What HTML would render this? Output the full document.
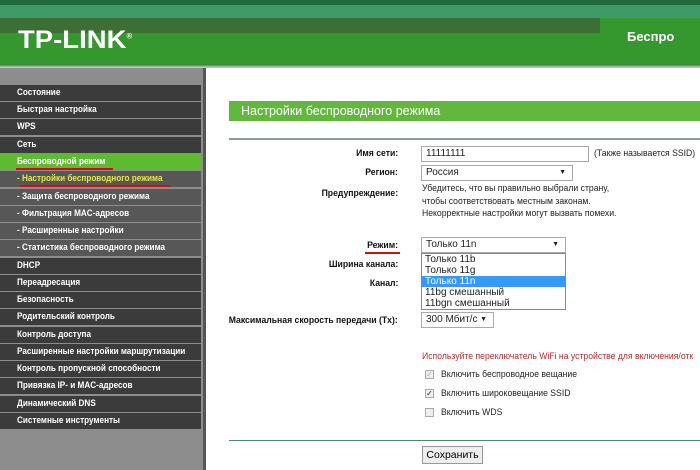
<!DOCTYPE html>
<html><head><meta charset="utf-8"><style>
*{margin:0;padding:0;box-sizing:border-box}
body{width:700px;height:470px;overflow:hidden;background:#fff;font-family:"Liberation Sans","DejaVu Sans",sans-serif;position:relative}
#hdr{position:absolute;left:0;top:0;width:700px;height:68px;background:#35982f;overflow:hidden}
#hdr .b1{position:absolute;left:0;top:0;width:700px;height:5px;background:#1f6b3a}
#hdr .b2{position:absolute;left:0;top:5px;width:700px;height:13px;background:#3f9a6a}
#hdr .b3{position:absolute;left:0;top:18px;width:600px;height:15px;background:#3c6e36}
#hdr .bl{position:absolute;left:0;top:64px;width:700px;height:4px;background:linear-gradient(#2a7a2a,#cfd8cf)}
#logo{position:absolute;left:18px;top:26px;color:#fff;font-weight:bold;font-size:25px;letter-spacing:0px;transform:scaleX(1.1);transform-origin:left}
#rt{position:absolute;left:627px;top:29px;color:#fff;font-size:13px;font-weight:bold;white-space:nowrap}
#side{position:absolute;left:0;top:68px;width:203px;height:402px;background:#8d8d8d}
#sb{position:absolute;left:203px;top:68px;width:3px;height:402px;background:#555}
.it{position:absolute;left:0;width:201px;height:16px;background:#3b3b3b;color:#fff;font-size:9.5px;font-weight:bold;line-height:16px;padding-left:17px;white-space:nowrap;overflow:hidden}
.it span{display:inline-block;transform:scaleX(0.86);transform-origin:left}
.it.s{background:#575757}
.it.g{background:#5cbb2f}
.it.y{color:#e8e840}
#title{position:absolute;left:229px;top:101px;width:471px;height:20px;background:#62b83c;color:#fff;font-size:12.5px;line-height:20px;padding-left:12px}
.hl{position:absolute;left:229px;width:471px;height:2px;background:#8a9a9a}
.lb{position:absolute;right:302px;font-size:9.5px;font-weight:bold;color:#111;white-space:nowrap;transform:scaleX(0.91);transform-origin:right}
.tx{position:absolute;font-size:9.5px;color:#222;white-space:nowrap;transform:scaleX(0.91);transform-origin:left}
.inp{position:absolute;border:1px solid #aaa;background:#fff;font-size:10px;padding-left:4px;color:#222;line-height:14px}
.arr{position:absolute;right:6px;top:0;font-size:7px}
.cb{position:absolute;left:425px;width:9px;height:9px;border:1px solid #aaa;background:#eee;font-size:8px;line-height:8px;text-align:center}
</style></head><body>
<div id="hdr"><div class="b1"></div><div class="b2"></div><div class="b3"></div><div class="bl"></div>
<div id="logo">TP-LINK<sup style="font-size:7px">®</sup></div><div id="rt">Беспро</div></div>
<div id="side"></div><div id="sb"></div>
<div class="it" style="top:85px"><span>Состояние</span></div>
<div class="it" style="top:102px"><span>Быстрая настройка</span></div>
<div class="it" style="top:119px"><span>WPS</span></div>
<div class="it" style="top:137px"><span>Сеть</span></div>
<div class="it g" style="top:154px"><span>Беспроводной режим</span><div style="position:absolute;left:16px;top:14px;width:97px;height:2px;background:#d01010"></div></div>
<div class="it s y" style="top:171px"><span>- Настройки беспроводного режима</span><div style="position:absolute;left:20px;top:14px;width:150px;height:2px;background:#d01010"></div></div>
<div class="it s" style="top:189px"><span>- Защита беспроводного режима</span></div>
<div class="it s" style="top:206px"><span>- Фильтрация MAC-адресов</span></div>
<div class="it s" style="top:223px"><span>- Расширенные настройки</span></div>
<div class="it s" style="top:240px"><span>- Статистика беспроводного режима</span></div>
<div class="it" style="top:258px"><span>DHCP</span></div>
<div class="it" style="top:275px"><span>Переадресация</span></div>
<div class="it" style="top:292px"><span>Безопасность</span></div>
<div class="it" style="top:309px"><span>Родительский контроль</span></div>
<div class="it" style="top:327px"><span>Контроль доступа</span></div>
<div class="it" style="top:344px"><span>Расширенные настройки маршрутизации</span></div>
<div class="it" style="top:361px"><span>Контроль пропускной способности</span></div>
<div class="it" style="top:378px"><span>Привязка IP- и MAC-адресов</span></div>
<div class="it" style="top:396px"><span>Динамический DNS</span></div>
<div class="it" style="top:413px"><span>Системные инструменты</span></div>

<div id="title">Настройки беспроводного режима</div>
<div class="hl" style="top:138px"></div>
<div class="lb" style="top:148px">Имя сети:</div>
<div class="inp" style="left:421px;top:146px;width:168px;height:16px">11111111</div>
<div class="tx" style="left:594px;top:148px">(Также называется SSID)</div>
<div class="lb" style="top:167px">Регион:</div>
<div class="inp" style="left:421px;top:165px;width:152px;height:16px">Россия<span class="arr">▼</span></div>
<div class="lb" style="top:188px">Предупреждение:</div>
<div class="tx" style="left:422px;top:183px;line-height:12.5px">Убедитесь, что вы правильно выбрали страну,<br>чтобы соответствовать местным законам.<br>Некорректные настройки могут вызвать помехи.</div>
<div class="lb" style="top:240px">Режим:</div>
<div style="position:absolute;left:365px;top:252px;width:35px;height:2px;background:#d01010"></div>
<div class="inp" style="left:421px;top:237px;width:145px;height:16px">Только 11n<span class="arr">▼</span></div>
<div style="position:absolute;left:421px;top:253px;width:145px;height:57px;border:1px solid #888;background:#fff;font-size:10px;line-height:11px;color:#222">
<div style="padding-left:3px">Только 11b</div><div style="padding-left:3px">Только 11g</div>
<div style="padding-left:3px;background:#3399ff;color:#fff">Только 11n</div>
<div style="padding-left:3px">11bg смешанный</div><div style="padding-left:3px">11bgn смешанный</div></div>
<div class="lb" style="top:259px">Ширина канала:</div>
<div class="lb" style="top:278px">Канал:</div>
<div class="lb" style="top:315px">Максимальная скорость передачи (Tx):</div>
<div class="inp" style="left:421px;top:312px;width:73px;height:16px">300 Мбит/с<span class="arr">▼</span></div>
<div class="tx" style="left:422px;top:351px;color:#c0282c">Используйте переключатель WiFi на устройстве для включения/отк</div>
<div class="cb" style="top:370px;color:#aaa">✓</div><div class="tx" style="left:441px;top:369px">Включить беспроводное вещание</div>
<div class="cb" style="top:389px;color:#222">✓</div><div class="tx" style="left:441px;top:388px">Включить широковещание SSID</div>
<div class="cb" style="top:408px"></div><div class="tx" style="left:441px;top:407px">Включить WDS</div>
<div class="hl" style="top:440px;background:#4a8a6a;height:1px"></div>
<div style="position:absolute;left:422px;top:446px;width:61px;height:18px;border:1px solid #999;background:#eee;font-size:10.5px;text-align:center;line-height:16px">Сохранить</div>
</body></html>
